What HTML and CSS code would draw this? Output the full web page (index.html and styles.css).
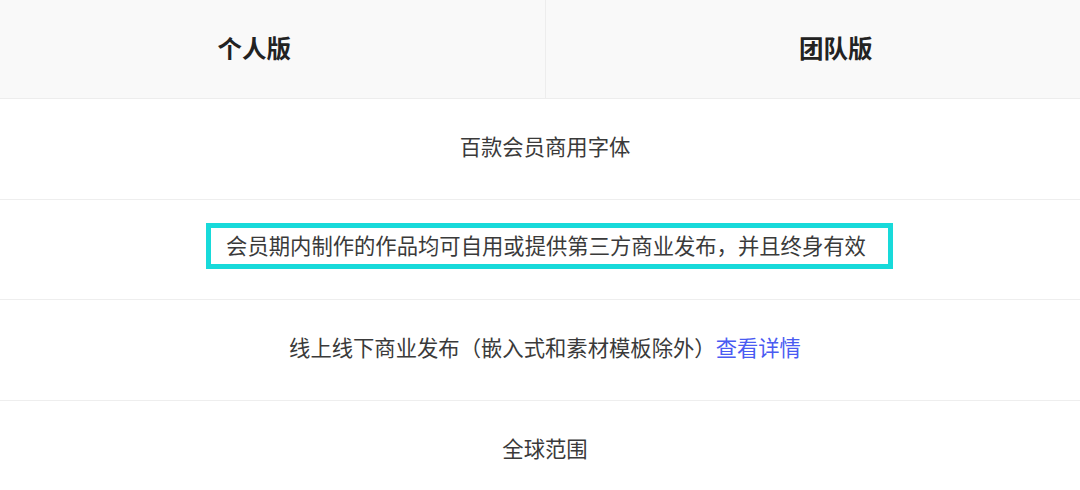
FILE: index.html
```html
<!DOCTYPE html>
<html lang="zh-CN">
<head>
  <meta charset="utf-8">
  <title>会员权益对比</title>
  <link rel="stylesheet" href="styles.css">
</head>
<body>
  <table class="plans">
    <thead>
      <tr>
        <th>个人版</th>
        <th>团队版</th>
      </tr>
    </thead>
    <tbody>
      <tr><td colspan="2">百款会员商用字体</td></tr>
      <tr><td colspan="2"><span class="mark">会员期内制作的作品均可自用或提供第三方商业发布，并且终身有效</span></td></tr>
      <tr><td colspan="2">线上线下商业发布（嵌入式和素材模板除外）<a href="#">查看详情</a></td></tr>
      <tr><td colspan="2">全球范围</td></tr>
    </tbody>
  </table>
</body>
</html>
```

FILE: styles.css
```css
html, body {
  margin: 0;
  height: 100%;
  overflow: hidden;
  background: #fff;
}

body {
  font-family: "Noto Sans CJK SC", "Noto Sans", sans-serif;
  color: #333;
}

.plans {
  border-collapse: collapse;
  table-layout: fixed;
  width: 1162px;
  margin-left: -36px;
}

.plans th {
  height: 95px;
  padding: 0 0 3px;
  background: #f9f9f9;
  font-size: 24.5px;
  font-weight: bold;
  color: #222;
  border-bottom: 1px solid #ededed;
  border-right: 1px solid #ededed;
}

.plans th:last-child {
  border-right: none;
}

.plans td {
  height: 93.5px;
  padding: 0 0 6px;
  text-align: center;
  font-size: 21.33px;
  color: #3a3a3a;
  border-bottom: 1px solid #eeeeee;
}

.plans a {
  color: #4a5bf2;
  text-decoration: none;
}

.mark {
  display: inline-block;
  margin-left: 9px;
  padding: 2px 22px 4px 15px;
  border: 5px solid #18dada;
  line-height: 30px;
}
```
